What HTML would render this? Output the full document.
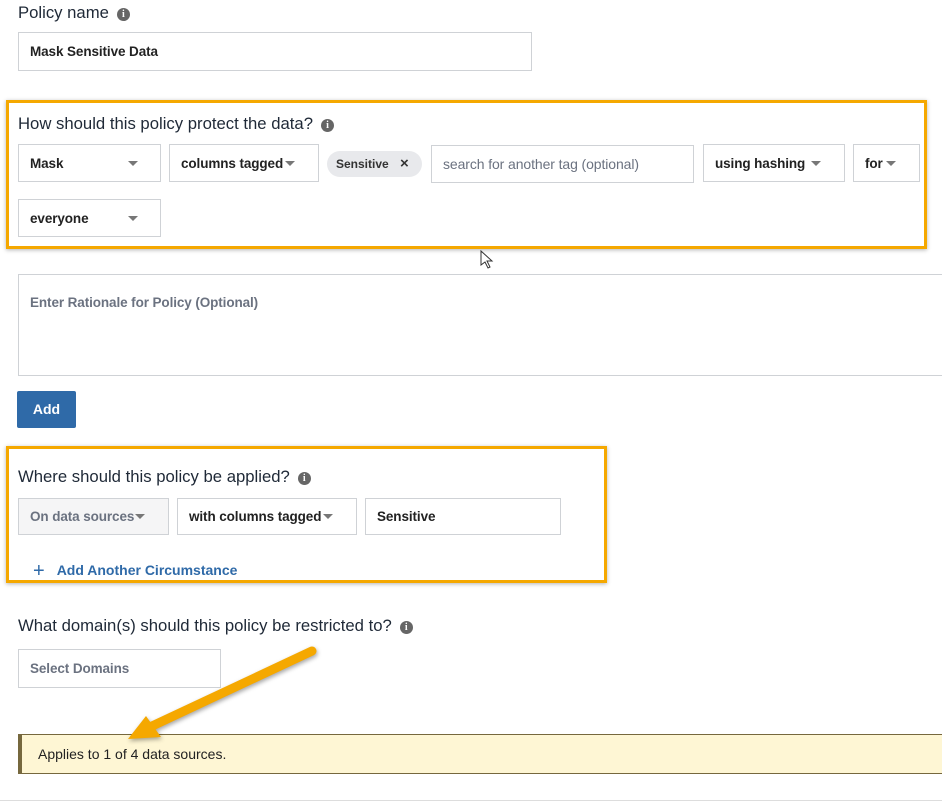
<!DOCTYPE html><html><head><style>
body{margin:0;width:942px;height:810px;background:#fff;font-family:"Liberation Sans",sans-serif;position:relative;overflow:hidden;color:#222}
.a{position:absolute}
.lbl{font-size:16.7px;color:#1f2937}
.in{position:absolute;border:1px solid #cfd2d6;background:#fff;box-sizing:border-box;font-size:13.5px;font-weight:bold;color:#222;display:flex;align-items:center;padding-left:11px;letter-spacing:-0.1px}
.car{position:absolute;width:0;height:0;border-left:5px solid transparent;border-right:5px solid transparent;border-top:5px solid #777}
.i{display:inline-block;width:13px;height:13px;border-radius:50%;background:#666;color:#fff;font-size:10px;font-weight:bold;text-align:center;line-height:13px;vertical-align:1px;margin-left:8px;font-family:"Liberation Serif",serif}
.ob{position:absolute;border:3px solid #f5a800;box-shadow:0 1px 4px rgba(0,0,0,.3);box-sizing:border-box}
.ph{color:#6b7280}
</style></head><body>
<div class="a lbl" style="left:18px;top:3px">Policy name<span class="i">i</span></div>
<div class="in" style="left:18px;top:32px;width:514px;height:39px">Mask Sensitive Data</div>

<div class="ob" style="left:6px;top:100px;width:921px;height:149px"></div>
<div class="a lbl" style="left:18px;top:114px">How should this policy protect the data?<span class="i">i</span></div>
<div class="in" style="left:18px;top:144px;width:143px;height:38px">Mask</div><div class="car" style="left:128px;top:161px"></div>
<div class="in" style="left:169px;top:144px;width:150px;height:38px">columns tagged</div><div class="car" style="left:285px;top:161px"></div>
<div class="a" style="left:327px;top:151px;width:95px;height:26px;border-radius:13px;background:#e8e9ec;font-size:12px;font-weight:bold;color:#333;line-height:26px;padding-left:9px;box-sizing:border-box">Sensitive<span style="position:absolute;left:73px;font-size:15px">×</span></div>
<div class="in ph" style="left:431px;top:145px;width:263px;height:38px;font-weight:normal;font-size:14px">search for another tag (optional)</div>
<div class="in" style="left:703px;top:144px;width:142px;height:38px">using hashing</div><div class="car" style="left:811px;top:161px"></div>
<div class="in" style="left:853px;top:144px;width:67px;height:38px">for</div><div class="car" style="left:886px;top:161px"></div>
<div class="in" style="left:18px;top:199px;width:143px;height:38px">everyone</div><div class="car" style="left:128px;top:216px"></div>
<svg class="a" style="left:480px;top:250px" width="14" height="20"><path d="M1 1 L1 15 L5 12 L8 18 L10 17 L7 11 L12 11 Z" fill="#fff" stroke="#333"/></svg>

<div class="in ph" style="left:18px;top:274px;width:930px;height:102px;align-items:flex-start;padding-top:20px">Enter Rationale for Policy (Optional)</div>
<div class="a" style="left:17px;top:391px;width:59px;height:37px;background:#2f6aa8;color:#fff;font-weight:bold;font-size:14px;text-align:center;line-height:37px;border-radius:2px">Add</div>

<div class="ob" style="left:6px;top:446px;width:601px;height:137px"></div>
<div class="a lbl" style="left:18px;top:467px">Where should this policy be applied?<span class="i">i</span></div>
<div class="in ph" style="left:18px;top:498px;width:151px;height:37px;background:#f5f5f6">On data sources</div><div class="car" style="left:135px;top:514px"></div>
<div class="in" style="left:177px;top:498px;width:180px;height:37px">with columns tagged</div><div class="car" style="left:323px;top:514px"></div>
<div class="in" style="left:365px;top:498px;width:196px;height:37px">Sensitive</div>
<div class="a" style="left:33px;top:560px;font-size:14px;font-weight:bold;color:#2f6aa8"><span style="font-size:20px;font-weight:normal;vertical-align:-2px;margin-right:12px">+</span>Add Another Circumstance</div>

<div class="a lbl" style="left:18px;top:616px">What domain(s) should this policy be restricted to?<span class="i">i</span></div>
<div class="in ph" style="left:18px;top:649px;width:203px;height:39px">Select Domains</div>

<div class="a" style="left:18px;top:734px;width:930px;height:40px;background:#fef6d4;border:1px solid #76683e;border-left:4px solid #76683e;box-sizing:border-box;font-size:14px;line-height:38px;padding-left:16px;color:#222">Applies to 1 of 4 data sources.</div>
<div class="a" style="left:0;top:800px;width:942px;height:1px;background:#ddd"></div>
<svg class="a" style="left:0;top:0" width="942" height="810"><g style="filter:drop-shadow(1px 2px 2px rgba(0,0,0,.35))"><line x1="312" y1="651" x2="150" y2="727" stroke="#f5a800" stroke-width="9" stroke-linecap="round"/><polygon points="128,739 146,716 161,737" fill="#f5a800"/></g></svg>
</body></html>
